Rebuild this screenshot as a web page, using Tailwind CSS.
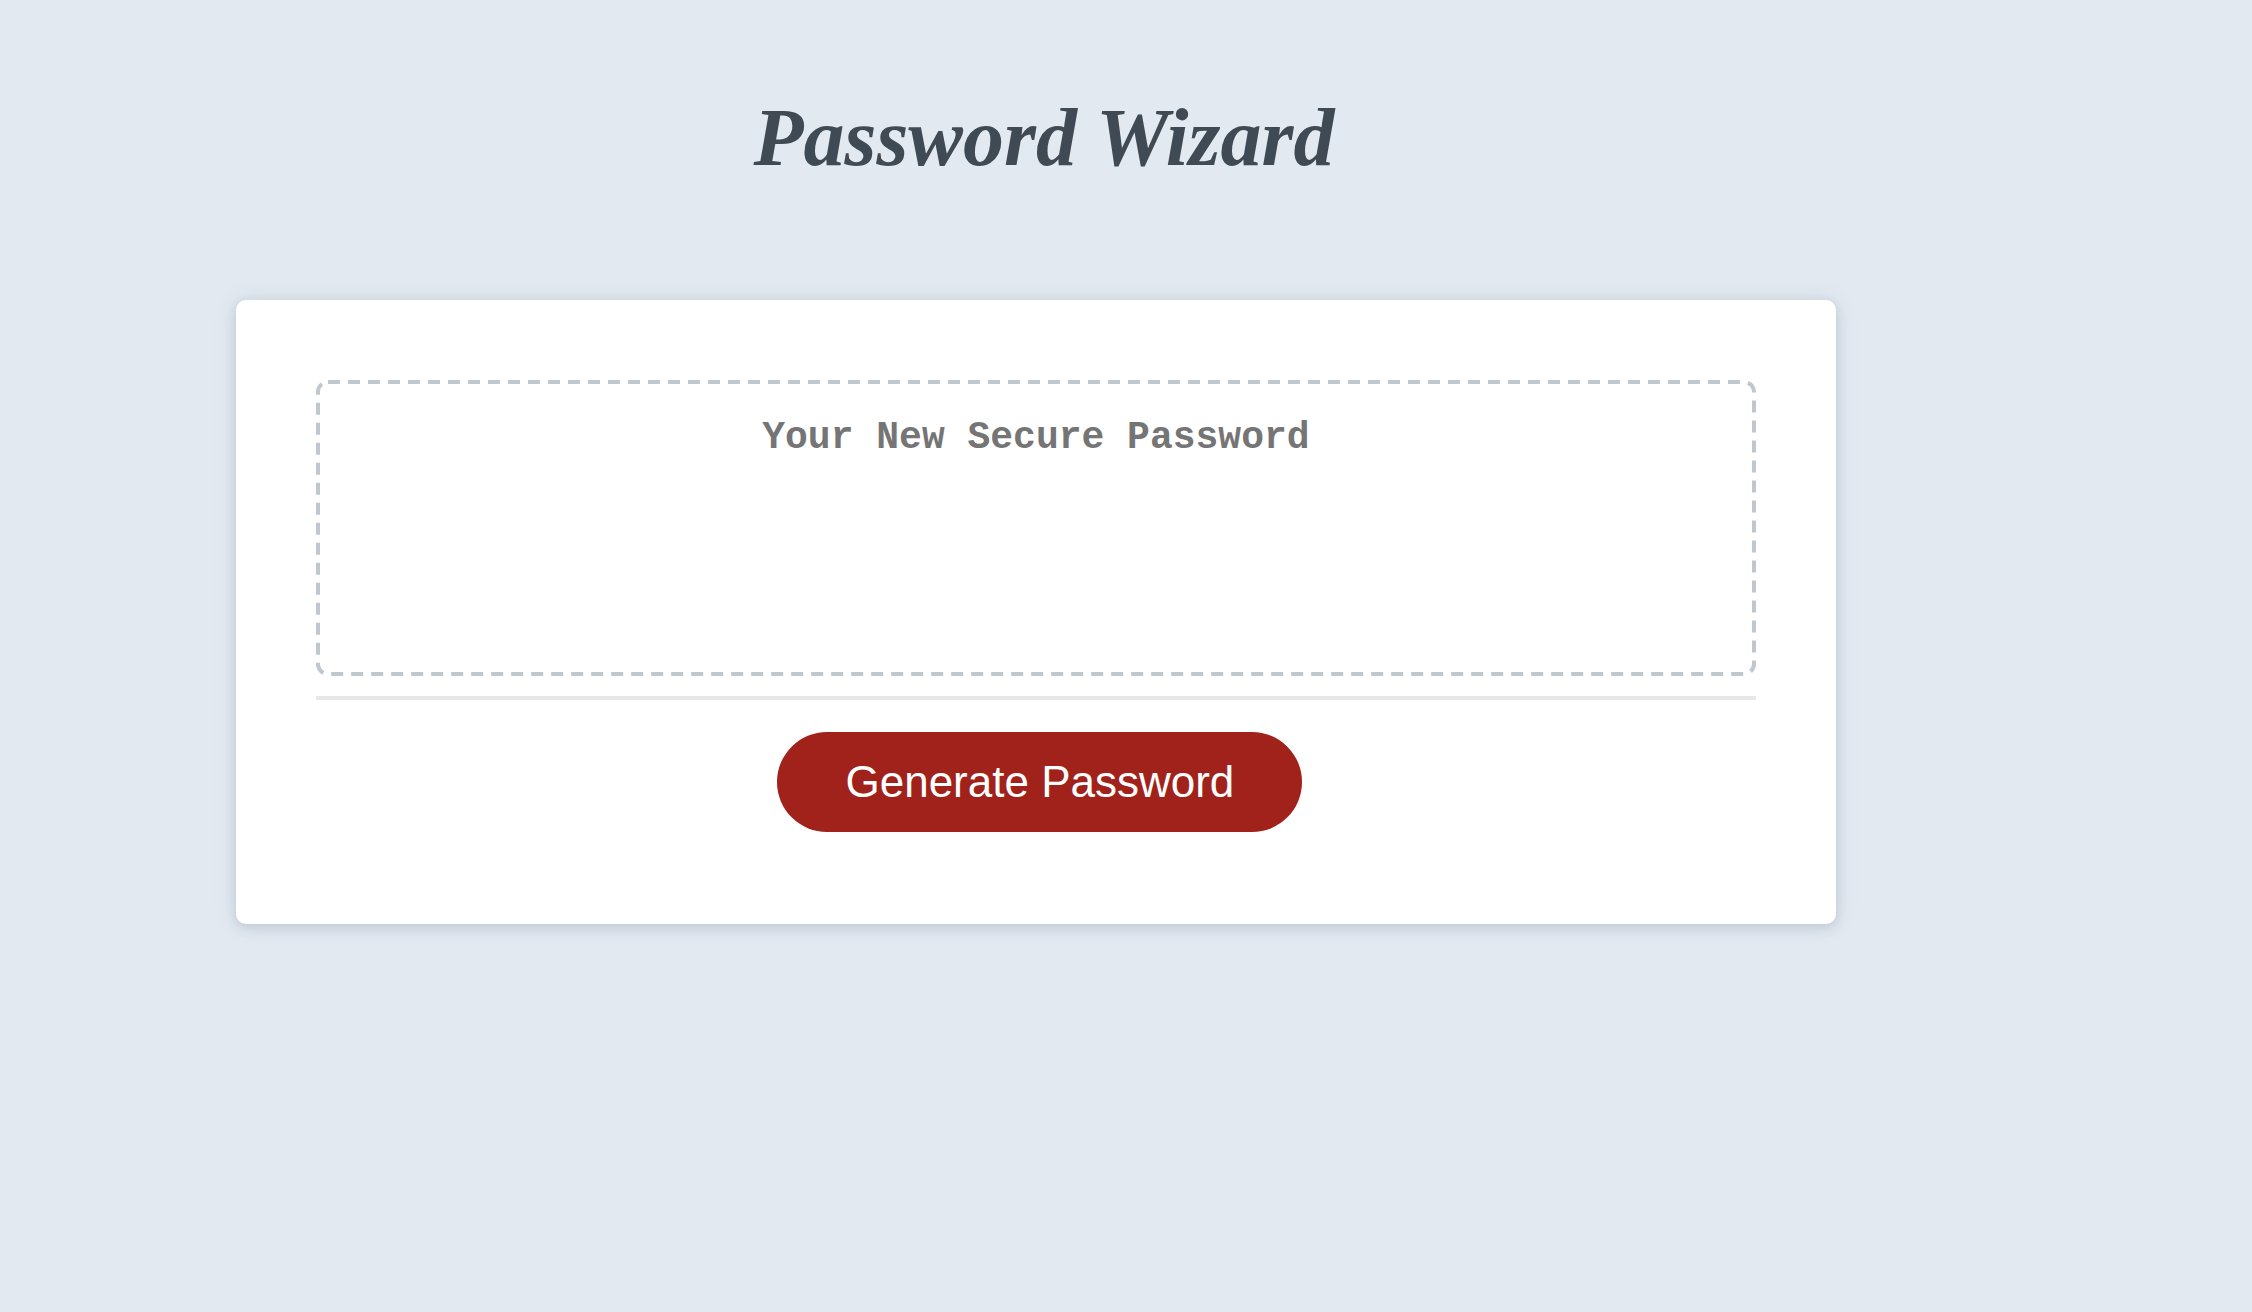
<!DOCTYPE html>
<html lang="en">
<head>
<meta charset="utf-8">
<meta name="viewport" content="width=device-width, initial-scale=1">
<title>Password Wizard</title>
<script src="https://cdn.jsdelivr.net/npm/@tailwindcss/browser@4"></script>
</head>
<body class="min-h-screen bg-[#e2e9f1] font-['Liberation_Sans',Arial,sans-serif] text-[#3f4a54]">
<div class="w-[92%]">
  <header class="flex h-[300px] justify-center pt-[90px]">
    <h1 class="h-24 pl-4 text-[82px] leading-[96px] font-bold italic whitespace-nowrap font-['Liberation_Serif',cursive]">Password Wizard</h1>
  </header>
  <main class="mx-auto w-full max-w-[1600px] rounded-[10px] bg-white px-20 pt-20 pb-[92px] shadow-[0_4px_12px_rgba(60,75,90,0.14),0_0_24px_rgba(60,75,90,0.1)]">
    <div class="relative">
      <!-- dashed frame: 12px dashes, 8px gaps -->
      <svg class="pointer-events-none absolute inset-0 h-full w-full p-[2px] overflow-visible" aria-hidden="true">
        <rect width="100%" height="100%" rx="10" fill="none" stroke="#bfc7cf" stroke-width="4" stroke-dasharray="12 8"/>
      </svg>
      <textarea readonly id="password" placeholder="Your New Secure Password" aria-label="Generated Password" class="block h-[296px] w-full resize-none rounded-[12px] p-9 text-center font-['Liberation_Mono','Courier_New',monospace] text-[38px] leading-[44px] font-bold placeholder:text-[#757575]"></textarea>
    </div>
    <div class="mt-5 flex justify-center border-t-4 border-[#e8e8e8] pt-8 pl-2">
      <button type="button" id="generate" class="h-[100px] rounded-full bg-[#a0221a] px-[68px] text-[44px] leading-[52px] text-white whitespace-nowrap">Generate Password</button>
    </div>
  </main>
</div>
</body>
</html>
